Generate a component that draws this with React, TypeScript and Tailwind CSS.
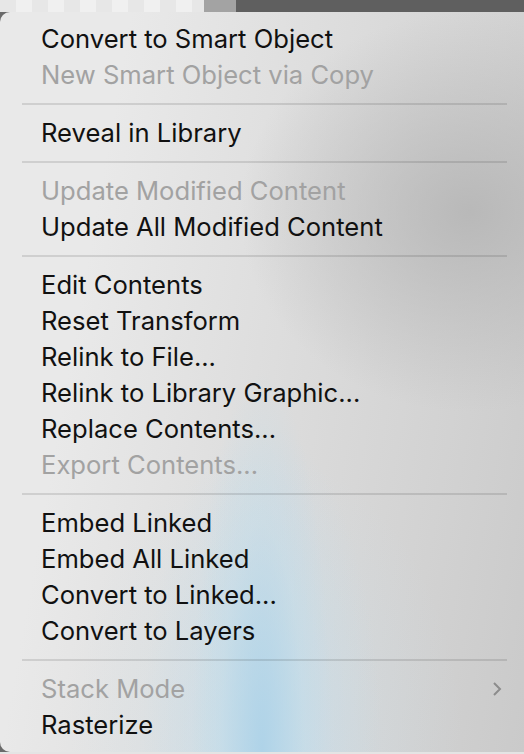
import React from "react";

type Item = { label: string; disabled?: boolean; sub?: boolean } | "sep";

const items: Item[] = [
  { label: "Convert to Smart Object" },
  { label: "New Smart Object via Copy", disabled: true },
  "sep",
  { label: "Reveal in Library" },
  "sep",
  { label: "Update Modified Content", disabled: true },
  { label: "Update All Modified Content" },
  "sep",
  { label: "Edit Contents" },
  { label: "Reset Transform" },
  { label: "Relink to File..." },
  { label: "Relink to Library Graphic..." },
  { label: "Replace Contents..." },
  { label: "Export Contents...", disabled: true },
  "sep",
  { label: "Embed Linked" },
  { label: "Embed All Linked" },
  { label: "Convert to Linked..." },
  { label: "Convert to Layers" },
  "sep",
  { label: "Stack Mode", disabled: true, sub: true },
  { label: "Rasterize" },
];

export default function App() {
  return (
    <div
      className="w-[524px] h-[754px] overflow-hidden flex flex-col bg-[#6a6a6a]"
      style={{ fontFamily: "Inter, 'Noto Sans', sans-serif" }}
    >
      <div className="h-[12px] flex shrink-0">
        <div className="w-[204px] h-full bg-[#ededed] bg-[repeating-conic-gradient(#f0f0f0_0%_25%,#e7e7e7_0%_50%)] bg-[length:32px_32px]" />
        <div className="w-[32px] h-full bg-[#a3a3a3]" />
        <div className="flex-1 h-full bg-[#5f5f5f]" />
      </div>
      <div className="flex-1 rounded-l-[10px] pt-[9px] pb-[9px] bg-[radial-gradient(ellipse_70px_380px_at_262px_100%,rgba(172,210,232,0.9),rgba(190,220,235,0.4)_60%,transparent),radial-gradient(ellipse_120px_330px_at_262px_100%,rgba(196,221,235,0.75),transparent),radial-gradient(ellipse_200px_300px_at_265px_100%,rgba(205,224,234,0.5),transparent),radial-gradient(ellipse_230px_200px_at_470px_200px,rgba(180,180,180,0.85),transparent),linear-gradient(100deg,#e9e9e9_20%,#d2d2d2_80%,#cacaca)] relative">
        {items.map((it, i) =>
          it === "sep" ? (
            <div key={i} className="h-[22px] flex items-center pl-[22px] pr-[17px]">
              <div className="h-[2px] w-full bg-[rgba(0,0,0,0.11)]" />
            </div>
          ) : (
            <div
              key={i}
              className={`h-[36px] flex items-center pl-[41px] pr-[22px] text-[25.6px] ${
                it.disabled ? "text-[#a2a2a2]" : "text-[#111111]"
              }`}
            >
              <span className="flex-1">{it.label}</span>
              {it.sub && (
                <svg width="10" height="16" viewBox="0 0 10 16">
                  <path d="M2 2 L8 8 L2 14" fill="none" stroke="#8c8c8c" strokeWidth="2" />
                </svg>
              )}
            </div>
          )
        )}
      </div>
      <div className="h-[2px] shrink-0 bg-[#e4e4e4]" />
    </div>
  );
}
